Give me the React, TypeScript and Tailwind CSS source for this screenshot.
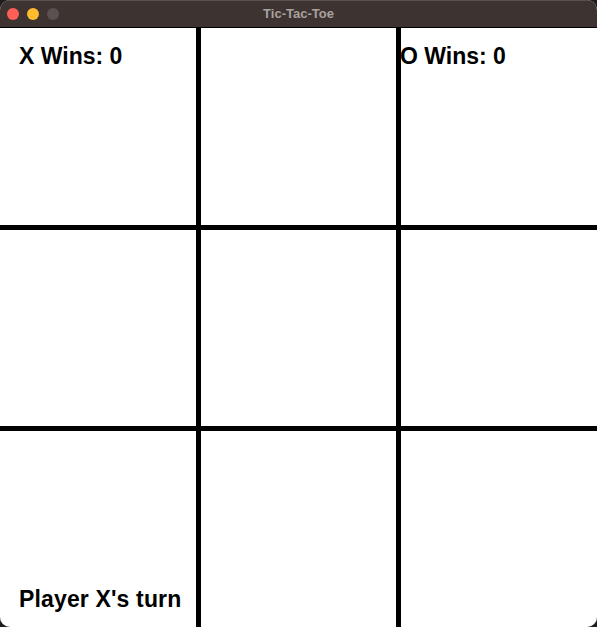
import React from "react";

export default function App() {
  const cells = Array.from({ length: 9 });
  return (
    <div className="w-[597px] h-[627px] bg-[#1e1e1e] overflow-hidden">
      <div className="w-[597px] h-[627px] rounded-[10px] overflow-hidden flex flex-col bg-white">
        <div className="relative h-[28px] shrink-0 bg-[#3d3432] border-t border-t-[#5a514e] border-b border-b-black flex items-center">
          <div className="flex items-center gap-[8px] pl-[7px]">
            <span className="w-[12px] h-[12px] rounded-full bg-[#fe5f57]" />
            <span className="w-[12px] h-[12px] rounded-full bg-[#febc2e]" />
            <span className="w-[12px] h-[12px] rounded-full bg-[#5a5250]" />
          </div>
          <div
            className="absolute inset-0 flex items-center justify-center text-[13px] font-bold text-[#a9a19e]"
            style={{ fontFamily: '"Liberation Sans", Arial, sans-serif' }}
          >
            Tic-Tac-Toe
          </div>
        </div>
        <div className="relative flex-1">
          <div className="grid grid-cols-[196px_195px_196px] grid-rows-[197px_196px_196px] gap-[5px] bg-black h-full">
            {cells.map((_, i) => (
              <div key={i} className="bg-white" />
            ))}
          </div>
          <div
            className="absolute left-[19px] top-[17px] text-[23px] font-bold text-black leading-none"
            style={{ fontFamily: '"Liberation Sans", Arial, sans-serif' }}
          >
            X Wins: 0
          </div>
          <div
            className="absolute left-[400px] top-[17px] text-[23px] font-bold text-black leading-none"
            style={{ fontFamily: '"Liberation Sans", Arial, sans-serif' }}
          >
            O Wins: 0
          </div>
          <div
            className="absolute left-[19px] top-[560px] text-[23px] font-bold text-black leading-none tracking-[0.15px]"
            style={{ fontFamily: '"Liberation Sans", Arial, sans-serif' }}
          >
            Player X's turn
          </div>
        </div>
      </div>
    </div>
  );
}
